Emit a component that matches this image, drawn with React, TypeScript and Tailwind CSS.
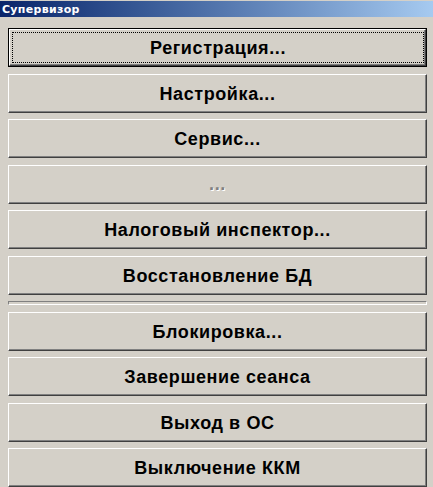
import React from "react";

const font = { fontFamily: '"Liberation Sans", Arial, sans-serif' };

function Btn({ label, mt, disabled }: { label: string; mt: string; disabled?: boolean }) {
  return (
    <div
      className={`${mt} h-[39px] w-[419px] bg-[#d4d0c8] border border-t-white border-l-white border-b-[#404040] border-r-[#404040] shadow-[inset_-1px_-1px_0_#808080] flex items-center justify-center`}
    >
      {disabled ? (
        <span className="text-[18px] font-bold tracking-[0.6px] text-[#808080] [text-shadow:1px_1px_0_#ffffff] leading-none pb-[2px]">
          ...
        </span>
      ) : (
        <span className="text-[18px] font-bold tracking-[0.6px] text-black leading-none">{label}</span>
      )}
    </div>
  );
}

export default function App() {
  return (
    <div className="w-[433px] h-[487px] bg-[#d4d0c8] overflow-hidden" style={font}>
      <div className="h-[1px] bg-[#d4d0c8]" />
      <div className="h-[16px] bg-gradient-to-r from-[#0a246a] to-[#a6caf0] flex items-center pl-[2px]">
        <span
          className="text-white font-bold text-[11px] tracking-[0.3px] leading-none"
          style={{ fontFamily: '"DejaVu Sans", "Liberation Sans", sans-serif' }}
        >
          Супервизор
        </span>
      </div>
      <div className="flex flex-col pl-[8px]">
        <div className="mt-[11px] h-[39px] w-[419px] border border-black">
          <div className="h-full w-full bg-[#d4d0c8] border border-t-white border-l-white border-b-[#404040] border-r-[#404040] shadow-[inset_-1px_-1px_0_#808080] flex">
            <div className="flex-1 mt-[2px] ml-[2px] mr-[1px] mb-[2px] border border-dotted border-black flex items-center justify-center">
              <span className="text-[18px] font-bold tracking-[0.6px] text-black leading-none">Регистрация...</span>
            </div>
          </div>
        </div>
        <Btn mt="mt-[7px]" label="Настройка..." />
        <Btn mt="mt-[6px]" label="Сервис..." />
        <Btn mt="mt-[7px]" label="..." disabled />
        <Btn mt="mt-[6px]" label="Налоговый инспектор..." />
        <Btn mt="mt-[7px]" label="Восстановление БД" />
        <div className="mt-[6px] h-[4px] w-[419px] border border-t-[#808080] border-l-[#808080] border-b-white border-r-white" />
        <Btn mt="mt-[7px]" label="Блокировка..." />
        <Btn mt="mt-[6px]" label="Завершение сеанса" />
        <Btn mt="mt-[7px]" label="Выход в ОС" />
        <Btn mt="mt-[6px]" label="Выключение ККМ" />
      </div>
    </div>
  );
}
